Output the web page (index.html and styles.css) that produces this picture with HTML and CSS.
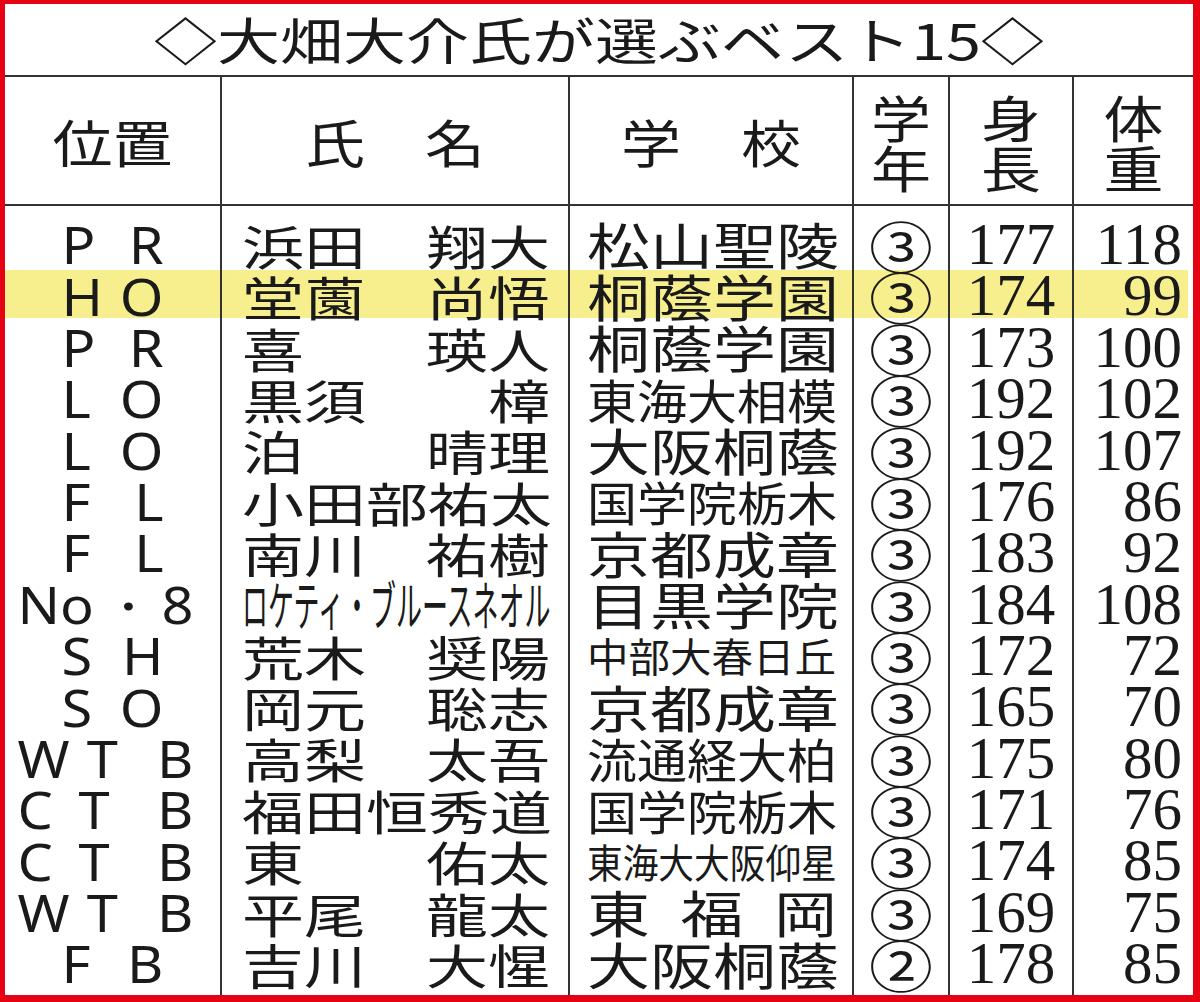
FILE: index.html
```html
<!DOCTYPE html>
<html lang="ja">
<head>
<meta charset="utf-8">
<title>大畑大介氏が選ぶベスト15</title>
<link rel="stylesheet" href="styles.css">
</head>
<body>
<div class="frame">
  <div class="title"><span class="title-text">◇大畑大介氏が選ぶベスト15◇</span></div>
  <div class="grid head">
    <div class="cell pos"><span class="h-text">位置</span></div>
    <div class="cell name-h"><span class="h-text">氏　名</span></div>
    <div class="cell school-h"><span class="h-text">学　校</span></div>
    <div class="cell"><span class="v-text">学<br>年</span></div>
    <div class="cell"><span class="v-text">身<br>長</span></div>
    <div class="cell"><span class="v-text">体<br>重</span></div>
  </div>
  <div class="body">
    <div class="grid row first">
      <div class="cell pos"><span class="lat two"><span>P</span><span>R</span></span></div>
      <div class="cell name"><span class="jp">浜田</span><span class="jp">翔大</span></div>
      <div class="cell school"><span class="jp s4">松山聖陵</span></div>
      <div class="cell grade"><span class="circ">③</span></div>
      <div class="cell ht"><span class="num">177</span></div>
      <div class="cell wt"><span class="num">118</span></div>
    </div>
    <div class="grid row mark">
      <div class="cell pos"><span class="lat two"><span>H</span><span>O</span></span></div>
      <div class="cell name"><span class="jp">堂薗</span><span class="jp">尚悟</span></div>
      <div class="cell school"><span class="jp s4">桐蔭学園</span></div>
      <div class="cell grade"><span class="circ">③</span></div>
      <div class="cell ht"><span class="num">174</span></div>
      <div class="cell wt"><span class="num">99</span></div>
    </div>
    <div class="grid row">
      <div class="cell pos"><span class="lat two"><span>P</span><span>R</span></span></div>
      <div class="cell name"><span class="jp">喜</span><span class="jp">瑛人</span></div>
      <div class="cell school"><span class="jp s4">桐蔭学園</span></div>
      <div class="cell grade"><span class="circ">③</span></div>
      <div class="cell ht"><span class="num">173</span></div>
      <div class="cell wt"><span class="num">100</span></div>
    </div>
    <div class="grid row">
      <div class="cell pos"><span class="lat two"><span>L</span><span>O</span></span></div>
      <div class="cell name"><span class="jp">黒須</span><span class="jp">樟</span></div>
      <div class="cell school"><span class="jp s5">東海大相模</span></div>
      <div class="cell grade"><span class="circ">③</span></div>
      <div class="cell ht"><span class="num">192</span></div>
      <div class="cell wt"><span class="num">102</span></div>
    </div>
    <div class="grid row">
      <div class="cell pos"><span class="lat two"><span>L</span><span>O</span></span></div>
      <div class="cell name"><span class="jp">泊</span><span class="jp">晴理</span></div>
      <div class="cell school"><span class="jp s4">大阪桐蔭</span></div>
      <div class="cell grade"><span class="circ">③</span></div>
      <div class="cell ht"><span class="num">192</span></div>
      <div class="cell wt"><span class="num">107</span></div>
    </div>
    <div class="grid row">
      <div class="cell pos"><span class="lat two"><span>F</span><span>L</span></span></div>
      <div class="cell name"><span class="jp">小田部祐太</span></div>
      <div class="cell school"><span class="jp s5">国学院栃木</span></div>
      <div class="cell grade"><span class="circ">③</span></div>
      <div class="cell ht"><span class="num">176</span></div>
      <div class="cell wt"><span class="num">86</span></div>
    </div>
    <div class="grid row">
      <div class="cell pos"><span class="lat two"><span>F</span><span>L</span></span></div>
      <div class="cell name"><span class="jp">南川</span><span class="jp">祐樹</span></div>
      <div class="cell school"><span class="jp s4">京都成章</span></div>
      <div class="cell grade"><span class="circ">③</span></div>
      <div class="cell ht"><span class="num">183</span></div>
      <div class="cell wt"><span class="num">92</span></div>
    </div>
    <div class="grid row">
      <div class="cell pos"><span class="lat three"><span>No</span><span>・</span><span>8</span></span></div>
      <div class="cell name"><span class="jp kana">ロケティ・ブルースネオル</span></div>
      <div class="cell school"><span class="jp s4">目黒学院</span></div>
      <div class="cell grade"><span class="circ">③</span></div>
      <div class="cell ht"><span class="num">184</span></div>
      <div class="cell wt"><span class="num">108</span></div>
    </div>
    <div class="grid row">
      <div class="cell pos"><span class="lat two"><span>S</span><span>H</span></span></div>
      <div class="cell name"><span class="jp">荒木</span><span class="jp">奨陽</span></div>
      <div class="cell school"><span class="jp s6">中部大春日丘</span></div>
      <div class="cell grade"><span class="circ">③</span></div>
      <div class="cell ht"><span class="num">172</span></div>
      <div class="cell wt"><span class="num">72</span></div>
    </div>
    <div class="grid row">
      <div class="cell pos"><span class="lat two"><span>S</span><span>O</span></span></div>
      <div class="cell name"><span class="jp">岡元</span><span class="jp">聡志</span></div>
      <div class="cell school"><span class="jp s4">京都成章</span></div>
      <div class="cell grade"><span class="circ">③</span></div>
      <div class="cell ht"><span class="num">165</span></div>
      <div class="cell wt"><span class="num">70</span></div>
    </div>
    <div class="grid row">
      <div class="cell pos"><span class="lat three tb"><span>W</span><span>T</span><span>B</span></span></div>
      <div class="cell name"><span class="jp">高梨</span><span class="jp">太吾</span></div>
      <div class="cell school"><span class="jp s5">流通経大柏</span></div>
      <div class="cell grade"><span class="circ">③</span></div>
      <div class="cell ht"><span class="num">175</span></div>
      <div class="cell wt"><span class="num">80</span></div>
    </div>
    <div class="grid row">
      <div class="cell pos"><span class="lat three tb"><span>C</span><span>T</span><span>B</span></span></div>
      <div class="cell name"><span class="jp">福田恒秀道</span></div>
      <div class="cell school"><span class="jp s5">国学院栃木</span></div>
      <div class="cell grade"><span class="circ">③</span></div>
      <div class="cell ht"><span class="num">171</span></div>
      <div class="cell wt"><span class="num">76</span></div>
    </div>
    <div class="grid row">
      <div class="cell pos"><span class="lat three tb"><span>C</span><span>T</span><span>B</span></span></div>
      <div class="cell name"><span class="jp">東</span><span class="jp">佑太</span></div>
      <div class="cell school"><span class="jp s7">東海大大阪仰星</span></div>
      <div class="cell grade"><span class="circ">③</span></div>
      <div class="cell ht"><span class="num">174</span></div>
      <div class="cell wt"><span class="num">85</span></div>
    </div>
    <div class="grid row">
      <div class="cell pos"><span class="lat three tb"><span>W</span><span>T</span><span>B</span></span></div>
      <div class="cell name"><span class="jp">平尾</span><span class="jp">龍太</span></div>
      <div class="cell school spread"><span class="jp s4">東</span><span class="jp s4">福</span><span class="jp s4">岡</span></div>
      <div class="cell grade"><span class="circ">③</span></div>
      <div class="cell ht"><span class="num">169</span></div>
      <div class="cell wt"><span class="num">75</span></div>
    </div>
    <div class="grid row last">
      <div class="cell pos"><span class="lat two"><span>F</span><span>B</span></span></div>
      <div class="cell name"><span class="jp">吉川</span><span class="jp">大惺</span></div>
      <div class="cell school"><span class="jp s4">大阪桐蔭</span></div>
      <div class="cell grade"><span class="circ">②</span></div>
      <div class="cell ht"><span class="num">178</span></div>
      <div class="cell wt"><span class="num">85</span></div>
    </div>
  </div>
</div>
</body>
</html>
```
FILE: styles.css
```css
html, body {
  margin: 0;
  padding: 0;
  background: #ffffff;
}

.frame {
  box-sizing: border-box;
  width: 1200px;
  height: 1002px;
  border-style: solid;
  border-color: #e40213;
  border-width: 4px 7px 7px 5px;
  display: flex;
  flex-direction: column;
  color: #1a1a1a;
  font-family: "Noto Sans CJK JP", "Noto Sans", sans-serif;
  overflow: hidden;
  background: #fff;
}

.title {
  flex: 0 0 auto;
  box-sizing: border-box;
  height: 73px;
  border-bottom: 2px solid #333;
  display: flex;
  align-items: center;
  justify-content: center;
}

.title-text {
  display: inline-block;
  font-size: 63px;
  line-height: 0.8;
  transform: scaleY(0.79);
  white-space: nowrap;
}

.grid {
  display: grid;
  grid-template-columns: 215px 348px 284px 96px 124px 121px;
}

.cell {
  box-sizing: border-box;
  display: flex;
  align-items: center;
  justify-content: center;
  border-left: 2px solid #333;
  min-width: 0;
}

.cell.pos {
  border-left: none;
}

.head {
  flex: 0 0 auto;
  height: 129px;
  border-bottom: 2px solid #333;
  box-sizing: border-box;
}

.h-text {
  display: inline-block;
  font-size: 60px;
  line-height: 0.8;
  transform: scaleY(0.86);
  white-space: nowrap;
}

.v-text {
  display: inline-block;
  font-size: 60px;
  line-height: 61px;
  text-align: center;
  transform: scaleY(0.83);
}

.body {
  flex: 1 1 auto;
  display: flex;
  flex-direction: column;
}

.row {
  flex: 0 0 auto;
  height: 51.36px;
}

.row.first {
  height: 64.36px;
}

.row.first .cell {
  padding-top: 13px;
}

.row.last {
  flex: 1 1 auto;
  height: 57.36px;
}

.row.last .cell {
  padding-bottom: 6px;
}

.row.mark {
  background: linear-gradient(#f7ef8e, #f7ef8e) no-repeat 0 0 / calc(100% - 5px) 48px;
}

/* position column */
.lat {
  display: flex;
  justify-content: space-between;
  font-family: "Noto Sans", "Liberation Sans", sans-serif;
  font-size: 56px;
  line-height: 0.8;
  transform: scaleY(0.9);
}

.lat.two {
  width: 102px;
}

.lat.three {
  width: 176px;
  margin-left: -14px;
}

.lat.tb > span:nth-child(2) {
  margin-right: 22px;
}

/* names */
.cell.name {
  justify-content: space-between;
  padding-left: 20px;
  padding-right: 18px;
}

.jp {
  display: inline-block;
  font-size: 62px;
  line-height: 0.8;
  white-space: nowrap;
  transform: scaleY(0.76);
}

.jp.kana {
  font-size: 26px;
  transform: scaleY(2.05);
}

/* school */
.cell.school {
  justify-content: flex-start;
  padding-left: 17px;
  padding-right: 15px;
}

.cell.school.spread {
  justify-content: space-between;
}

.jp.s4 {
  font-size: 63px;
  transform: scaleY(0.79);
}

.jp.s5 {
  font-size: 50px;
  transform: scaleY(0.93);
}

.jp.s6 {
  font-size: 41.5px;
  transform: scaleY(0.95);
}

.jp.s7 {
  font-size: 35.7px;
  transform: scaleY(1.12);
}

/* grade */
.circ {
  display: inline-block;
  font-size: 64px;
  line-height: 0.8;
  transform: scaleY(0.86);
}

/* numbers */
.num {
  display: inline-block;
  font-family: "Liberation Serif", "Times New Roman", serif;
  font-size: 59px;
  line-height: 0.8;
}

.cell.wt {
  justify-content: flex-end;
  padding-right: 11px;
}
```
